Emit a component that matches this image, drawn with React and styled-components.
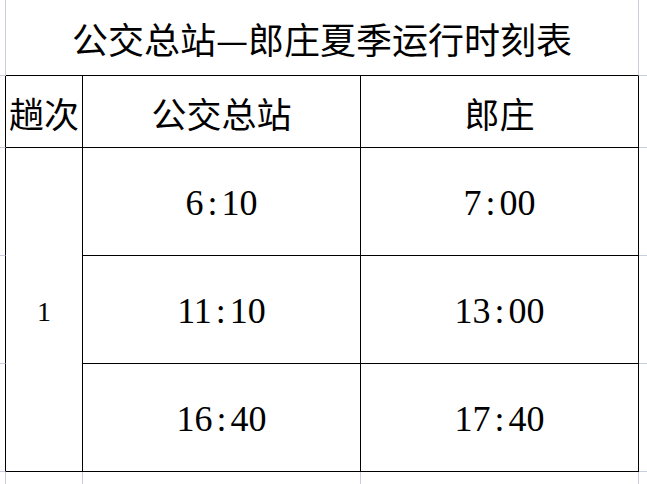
import React from "react";
import styled, { createGlobalStyle } from "styled-components";

const GRID = "#c8cedb";
const INK = "#000";

const GlobalStyle = createGlobalStyle`
  html, body {
    margin: 0;
    padding: 0;
    background: #fff;
  }
`;

const Sheet = styled.div`
  display: grid;
  grid-template-columns: 6px 77px 278px 278px 1fr;
  grid-template-rows: 76px 72px 108px 108px 108px 1fr;
  width: 647px;
  height: 484px;
  background: #fff;
  color: #000;
  box-sizing: border-box;
`;

const centered = `
  display: flex;
  align-items: center;
  justify-content: center;
  box-sizing: border-box;
  white-space: nowrap;
`;

// empty sheet cells around the table (faint spreadsheet gridlines)
const SideCell = styled.div`
  box-sizing: border-box;
  border-right: ${p =>
    p.$right === "ink" ? `1px solid ${INK}` : p.$right === "grid" ? `1px solid ${GRID}` : "none"};
  border-bottom: ${p => (p.$bottom ? `1px solid ${GRID}` : "none")};
`;

const TitleCell = styled.div`
  ${centered}
  grid-column: 2 / 5;
  border-right: 1px solid ${GRID};
  border-bottom: 1px solid ${INK};
  font-family: "Noto Sans CJK SC", sans-serif;
  font-size: 36px;
  padding-top: 1px;
`;

const TableCell = styled.div`
  ${centered}
  border-right: 1px solid ${INK};
  border-bottom: 1px solid ${INK};
`;

const HeadCell = styled(TableCell)`
  font-family: "Noto Sans CJK SC", sans-serif;
  font-size: 35px;
  padding-top: 2px;
`;

// merged cell spanning the three time rows
const TripCell = styled(TableCell)`
  grid-area: 3 / 2 / 6 / 3;
  font-family: "Liberation Serif", serif;
  font-size: 28px;
  padding-top: 4px;
`;

const TimeCell = styled(TableCell)`
  font-family: "Liberation Serif", serif;
  font-size: 36px;
  padding-top: 2px;
`;

const Colon = styled.span`
  display: inline-block;
  width: 0.5em;
  text-align: center;
`;

const trips = [
  ["6", "10", "7", "00"],
  ["11", "10", "13", "00"],
  ["16", "40", "17", "40"]
];

const Time = ({ h, m }) => (
  <TimeCell>
    {h}
    <Colon>:</Colon>
    {m}
  </TimeCell>
);

export default function App() {
  return (
    <>
      <GlobalStyle />
      <Sheet>
        <SideCell $right="grid" $bottom />
        <TitleCell>公交总站—郎庄夏季运行时刻表</TitleCell>
        <SideCell $bottom />

        <SideCell $right="ink" $bottom />
        <HeadCell>趟次</HeadCell>
        <HeadCell>公交总站</HeadCell>
        <HeadCell>郎庄</HeadCell>
        <SideCell $bottom />

        <TripCell>1</TripCell>
        {trips.map((t, i) => (
          <React.Fragment key={i}>
            <SideCell $right="ink" $bottom />
            <Time h={t[0]} m={t[1]} />
            <Time h={t[2]} m={t[3]} />
            <SideCell $bottom />
          </React.Fragment>
        ))}

        <SideCell $right="grid" />
        <SideCell $right="grid" />
        <SideCell $right="grid" />
        <SideCell $right="grid" />
        <SideCell />
      </Sheet>
    </>
  );
}
